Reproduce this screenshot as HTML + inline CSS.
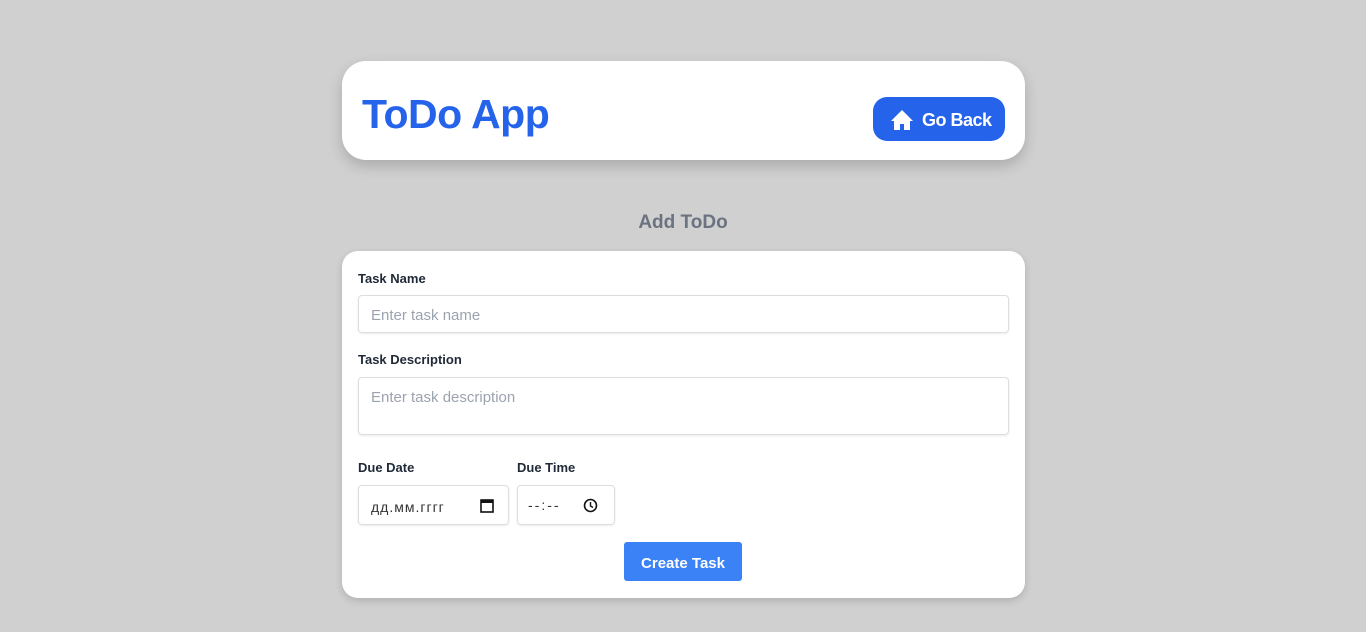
<!DOCTYPE html>
<html><head><meta charset="utf-8"><style>
*{box-sizing:border-box;margin:0;padding:0}
body{width:1366px;height:632px;background:#d0d0d0;font-family:"Liberation Sans",sans-serif;position:relative;overflow:hidden}
.hdr{position:absolute;left:342px;top:61px;width:683px;height:99px;background:#fff;border-radius:24px;box-shadow:0 6px 14px rgba(0,0,0,.18)}
.hdr h1{position:absolute;left:20px;top:31px;font-size:41px;font-weight:bold;color:#2563eb;letter-spacing:-0.5px;line-height:44px}
.btn{position:absolute;left:531px;top:36px;width:132px;height:44px;background:#2563eb;border-radius:14px;color:#fff;font-size:18px;font-weight:bold;display:flex;align-items:center;padding-left:17px;letter-spacing:-0.5px;padding-top:2px}
.btn svg{margin-right:8px}
.title{position:absolute;left:0;width:1366px;top:212px;text-align:center;font-size:19px;font-weight:bold;color:#6b7280}
.card{position:absolute;left:342px;top:251px;width:683px;height:347px;background:#fff;border-radius:16px;box-shadow:0 3px 8px rgba(0,0,0,.15)}
label{position:absolute;font-size:13px;font-weight:bold;color:#1f2937}
.in{position:absolute;border:1px solid #ddd;border-radius:4px;box-shadow:0 1px 2px rgba(0,0,0,.08);font-size:15px;color:#9ca3af;padding-left:12px;display:flex;align-items:center}
.cr{position:absolute;left:282px;top:291px;width:118px;height:39px;background:#3b82f6;border-radius:3px;color:#fff;font-weight:bold;font-size:15px;display:flex;align-items:center;justify-content:center;padding-top:3px}
</style></head><body>
<div class="hdr"><h1>ToDo App</h1>
<div class="btn"><svg width="24" height="22" viewBox="0 0 24 22"><path d="M12 1L1 12h3v9h6v-6h4v6h6v-9h3z" fill="#fff"/></svg>Go Back</div></div>
<div class="title">Add ToDo</div>
<div class="card">
<label style="left:16px;top:20px">Task Name</label>
<div class="in" style="left:16px;top:44px;width:651px;height:38px;padding-top:2px">Enter task name</div>
<label style="left:16px;top:101px">Task Description</label>
<div class="in" style="left:16px;top:126px;width:651px;height:58px;align-items:flex-start;padding-top:11px">Enter task description</div>
<label style="left:16px;top:209px">Due Date</label>
<label style="left:175px;top:209px">Due Time</label>
<div class="in" style="left:16px;top:234px;width:151px;height:40px;color:#333;font-size:14px;letter-spacing:1px;padding-top:3px">дд.мм.гггг<svg style="position:absolute;right:14px;top:12px" width="14" height="15" viewBox="0 0 14 15"><rect x="1" y="2" width="12" height="12" fill="none" stroke="#111" stroke-width="1.6"/><rect x="1" y="2" width="12" height="3" fill="#111"/></svg></div>
<div class="in" style="left:175px;top:234px;width:98px;height:40px;color:#333;font-size:14px;letter-spacing:2px;padding-left:10px">--:--<svg style="position:absolute;right:16px;top:12px" width="15" height="15" viewBox="0 0 15 15"><circle cx="7.5" cy="7.5" r="6" fill="none" stroke="#111" stroke-width="1.6"/><path d="M7.5 4v4l2.5 1.5" fill="none" stroke="#111" stroke-width="1.4"/></svg></div>
<div class="cr">Create Task</div>
</div>
</body></html>
